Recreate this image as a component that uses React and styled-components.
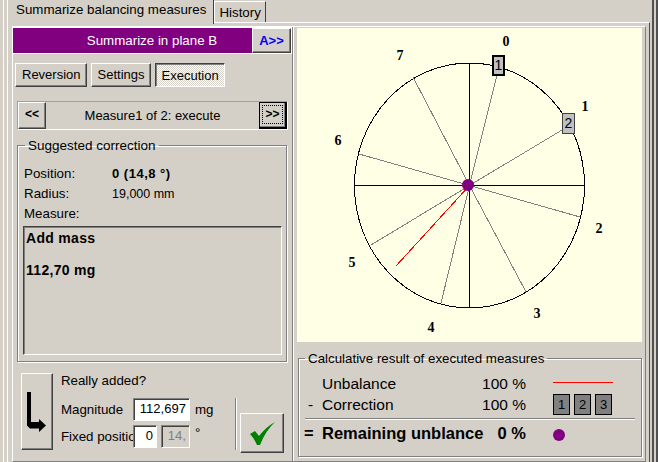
import React from 'react';
import styled, { createGlobalStyle, css } from 'styled-components';

const GlobalStyle = createGlobalStyle`
  html, body {
    margin: 0;
    padding: 0;
    background: #d4d0c8;
    overflow: hidden;
  }
`;

const raised = css`
  border: 1px solid;
  border-color: #fff #404040 #404040 #fff;
  box-shadow: inset -1px -1px 0 #808080;
`;

const Window = styled.div`
  width: 658px;
  height: 462px;
  box-sizing: border-box;
  background: #d4d0c8;
  font-family: "Liberation Sans", Arial, sans-serif;
  font-size: 13.33px;
  color: #000;
  padding-left: 3px;
  overflow: hidden;
`;

const OuterFrame = styled.div`
  box-sizing: border-box;
  height: 462px;
  border-left: 1px solid #fff;
  border-right: 2px solid #505050;
  padding-right: 2px;
`;

const InnerFrame = styled.div`
  box-sizing: border-box;
  height: 462px;
  border-right: 2px solid #505050;
  padding: 0 2px 0 3px;
`;

const TabStrip = styled.div`
  display: flex;
  align-items: flex-start;
  height: 22px;
  position: relative;
  z-index: 1;
`;

const Tab = styled.div`
  box-sizing: border-box;
  background: #d4d0c8;
  border-left: 1px solid #fff;
  border-right: 1px solid #404040;
  white-space: nowrap;
  ${p => (p.$active
    ? css`
      height: 24px;
      line-height: 20px;
      padding: 0 7px 0 8px;
    `
    : css`
      height: 21px;
      margin-top: 1px;
      line-height: 21px;
      padding: 0 4px;
      border-top: 1px solid #fff;
    `)}
`;

const Page = styled.div`
  box-sizing: border-box;
  height: 440px;
  border-top: 1px solid #fff;
  border-left: 1px solid #fff;
  border-right: 1px solid #505050;
  padding: 3px 3px 0 4px;
`;

const Body = styled.div`
  display: grid;
  grid-template-columns: 280px 1fr;
  box-sizing: border-box;
  height: 436px;
  border-top: 1px solid #fff;
  border-left: 1px solid #fff;
  border-right: 1px solid #808080;
  border-bottom: 1px solid #808080;
`;

const LeftColumn = styled.div`
  display: flex;
  flex-direction: column;
  padding-top: 1px;
  border-right: 1px solid #808080;
`;

const RightColumn = styled.div`
  padding: 1px 3px 0 3px;
  border-left: 1px solid #fff;
`;

const Header = styled.div`
  display: flex;
  flex: none;
  box-sizing: border-box;
  height: 26px;
  background: #800080;
  color: #fff;
  border-right: 1px solid #fff;
  border-bottom: 1px solid #fff;
  box-shadow: 0 -1px 0 #fff;
`;

const HeaderTitle = styled.div`
  flex: 1;
  text-align: center;
  line-height: 25px;
  padding-left: 39px;
`;

const PlaneButton = styled.div`
  ${raised}
  width: 39px;
  box-sizing: border-box;
  background: #d4d0c8;
  color: #0000ff;
  font-weight: bold;
  font-size: 13px;
  line-height: 23px;
  text-align: center;
`;

const TabButtons = styled.div`
  display: flex;
  gap: 4px;
  padding: 9px 0 0 2px;
`;

const ModeButton = styled.div`
  ${raised}
  box-sizing: border-box;
  height: 24px;
  font-size: 13px;
  line-height: 22px;
  padding: 0 5px 0 6px;
  ${p => p.$active && css`
    border-color: #404040 #fff #fff #404040;
    box-shadow: inset 1px 1px 0 #808080;
    line-height: 23px;
    padding: 0 5px 0 6px;
    background: repeating-conic-gradient(#fff 0 25%, #d4d0c8 0 50%) 0 0 / 2px 2px;
  `}
`;

const Pager = styled.div`
  display: flex;
  align-items: center;
  flex: none;
  box-sizing: border-box;
  height: 29px;
  margin: 14px 4px 0 4px;
  border: 1px solid;
  border-color: #a0a0a0 #fff #fff #a0a0a0;
`;

const PagerButton = styled.div`
  ${raised}
  width: 28px;
  height: 27px;
  box-sizing: border-box;
  font-weight: bold;
  font-size: 12px;
  line-height: 23px;
  text-align: center;
  ${p => p.$focused && css`
    border: 2px solid #000;
    border-top-width: 1px;
    border-left-width: 1px;
    box-shadow: inset -1px -1px 0 #808080;
    position: relative;
    &::after {
      content: '';
      position: absolute;
      inset: 2px 2px 3px 2px;
      border: 1px dotted #000;
    }
  `}
`;

const PagerLabel = styled.div`
  flex: 1;
  text-align: center;
  font-size: 13px;
`;

const GroupBox = styled.fieldset`
  margin: 0;
  min-width: 0;
  box-sizing: border-box;
  border: 1px solid #808080;
  box-shadow: inset 1px 1px 0 #fff, 1px 1px 0 #fff;
`;

const GroupLegend = styled.legend`
  padding: 0 3px;
  line-height: 15px;
  font-size: 13.5px;
  white-space: nowrap;
`;

const CorrectionBox = styled(GroupBox)`
  flex: none;
  margin: 8px 5px 0 4px;
  height: 224px;
  padding: 11px 4px 0 6px;
  ${GroupLegend} {
    margin-left: 1px;
  }
`;

const InfoRow = styled.div`
  display: grid;
  grid-template-columns: 88px 1fr;
  height: 20px;
  line-height: 20px;
`;

const InfoValue = styled.span`
  font-size: 12.5px;
  ${p => p.$bold && css`
    font-weight: bold;
    font-size: 13px;
    letter-spacing: 0.5px;
  `}
`;

const MeasureBox = styled.div`
  box-sizing: border-box;
  height: 129px;
  margin: 2px 0 0 -1px;
  padding: 0 2px;
  border: 1px solid;
  border-color: #404040 #fff #fff #404040;
  box-shadow: inset 1px 1px 0 #808080;
  font-weight: bold;
  font-size: 14px;
  letter-spacing: 0.3px;
`;

const MeasureLine = styled.div`
  height: 32px;
  line-height: 22px;
`;

const Confirm = styled.div`
  display: flex;
  padding: 11px 8px 0 8px;
`;

const ArrowButton = styled.div`
  ${raised}
  box-sizing: border-box;
  width: 32px;
  height: 77px;
  display: flex;
  align-items: center;
  justify-content: center;
`;

const ConfirmFields = styled.div`
  width: 175px;
  margin-left: 8px;
`;

const ReallyLabel = styled.div`
  line-height: 16px;
  height: 25px;
`;

const FieldRow = styled.div`
  display: flex;
  align-items: flex-start;
  height: 27px;
  line-height: 23px;
`;

const FieldLabel = styled.div`
  width: 72px;
  white-space: nowrap;
  overflow: hidden;
`;

const Field = styled.div`
  box-sizing: border-box;
  height: 23px;
  width: ${p => p.$width}px;
  margin-right: 5px;
  ${p => p.$disabled && 'margin-left: -1px;'}
  font-size: 13px;
  line-height: 20px;
  padding-right: 3px;
  text-align: right;
  overflow: hidden;
  background: ${p => (p.$disabled ? '#d4d0c8' : '#fff')};
  color: ${p => (p.$disabled ? '#808080' : '#000')};
  border: 1px solid;
  border-color: #808080 #fff #fff #808080;
  box-shadow: inset 1px 1px 0 #404040;
`;

const DegreeSign = styled.span`
  line-height: 16px;
`;

const Divider = styled.div`
  width: 1px;
  height: 52px;
  margin: 25px 3px 0 0;
  background: #808080;
  border-right: 1px solid #fff;
`;

const CheckButton = styled.div`
  ${raised}
  box-sizing: border-box;
  width: 44px;
  height: 40px;
  margin-top: 40px;
  display: flex;
  align-items: center;
  justify-content: center;
`;

const Canvas = styled.div`
  position: relative;
  width: 345px;
  height: 314px;
  background: #ffffe6;
`;

const DialSvg = styled.svg`
  display: block;
`;

const Spot = styled.div`
  position: absolute;
  left: ${p => p.$x}px;
  top: ${p => p.$y}px;
  transform: translate(-50%, -50%);
  font-family: "Liberation Serif", serif;
  font-weight: bold;
  font-size: 14px;
  line-height: 14px;
`;

const SpotMarker = styled.div`
  position: absolute;
  left: ${p => p.$x}px;
  top: ${p => p.$y}px;
  box-sizing: border-box;
  width: 13px;
  height: 21px;
  line-height: ${p => (p.$current ? 17 : 19)}px;
  text-align: center;
  font-size: 14px;
  background: #c0c0c0;
  border: ${p => (p.$current ? '2px solid #000' : '1px solid #404040')};
`;

const ResultBox = styled(GroupBox)`
  margin: 9px 0 0 1px;
  height: 106px;
  padding: 8px 5px 0 5px;
  ${GroupLegend} {
    margin-left: 1px;
    font-size: 13.33px;
  }
`;

const ResultRow = styled.div`
  display: grid;
  grid-template-columns: 18px 154px 50px 27px 1fr;
  align-items: center;
  height: 20px;
  font-size: 15.5px;
  white-space: nowrap;
`;

const Minus = styled.span`
  padding-left: 4px;
`;

const Percent = styled.span`
  text-align: right;
`;

const LegendLine = styled.div`
  height: 1px;
  width: 60px;
  background: #ff0000;
  margin-top: -4px;
`;

const Squares = styled.div`
  display: flex;
  gap: 4px;
`;

const Square = styled.div`
  box-sizing: border-box;
  width: 17px;
  height: 21px;
  border: 1px solid #000;
  background: #808080;
  font-size: 13px;
  line-height: 19px;
  text-align: center;
`;

const Rule = styled.div`
  height: 1px;
  margin: 4px 1px 0 1px;
  background: #808080;
  border-bottom: 1px solid #fff;
`;

const RemainingRow = styled(ResultRow)`
  height: 26px;
  font-weight: bold;
  font-size: 16.5px;
`;

const Dot = styled.div`
  width: 12px;
  height: 12px;
  margin-top: 3px;
  border-radius: 50%;
  background: #800080;
`;

const cx = 172.5;
const cy = 157.5;

// spoke ends and number labels, in canvas coordinates
const spokes = [
  [200, 47], [265, 102], [283, 189], [229, 264],
  [144, 275], [74, 217], [62, 126], [116, 49],
];

const labels = [
  ['0', 209, 14], ['1', 288, 79], ['2', 302, 201], ['3', 240, 286],
  ['4', 134, 300], ['5', 55, 235], ['6', 41, 113], ['7', 103, 28],
];

const Dial = () => (
  <Canvas>
    <DialSvg width="345" height="314" shapeRendering="crispEdges">
      <ellipse cx={cx} cy={cy} rx="115" ry="122.5" fill="none" stroke="#000" />
      <path d={`M${cx} 35V280M58 ${cy}H288`} stroke="#000" />
      {spokes.map(([x, y]) => (
        <line key={x} x1={cx} y1={cy} x2={x} y2={y} stroke="#808080" />
      ))}
      <line x1={cx} y1={cy} x2="99" y2="238" stroke="#f00" />
      <circle cx="171" cy="157" r="6" fill="#800080" shapeRendering="auto" />
    </DialSvg>
    {labels.map(([text, x, y]) => (
      <Spot key={text} $x={x} $y={y}>{text}</Spot>
    ))}
    <SpotMarker $current $x={195} $y={27}>1</SpotMarker>
    <SpotMarker $x={265} $y={85}>2</SpotMarker>
  </Canvas>
);

const App = () => (
  <Window>
    <GlobalStyle />
    <OuterFrame>
      <InnerFrame>
        <TabStrip>
          <Tab $active>Summarize balancing measures</Tab>
          <Tab>History</Tab>
        </TabStrip>
        <Page>
          <Body>
            <LeftColumn>
              <Header>
                <HeaderTitle>Summarize in plane B</HeaderTitle>
                <PlaneButton>A&gt;&gt;</PlaneButton>
              </Header>
              <TabButtons>
                <ModeButton>Reversion</ModeButton>
                <ModeButton>Settings</ModeButton>
                <ModeButton $active>Execution</ModeButton>
              </TabButtons>
              <Pager>
                <PagerButton>&lt;&lt;</PagerButton>
                <PagerLabel>Measure1 of 2: execute</PagerLabel>
                <PagerButton $focused>&gt;&gt;</PagerButton>
              </Pager>
              <CorrectionBox>
                <GroupLegend>Suggested correction</GroupLegend>
                <InfoRow>Position: <InfoValue $bold>0 (14,8 °)</InfoValue></InfoRow>
                <InfoRow>Radius: <InfoValue>19,000 mm</InfoValue></InfoRow>
                <InfoRow>Measure:</InfoRow>
                <MeasureBox>
                  <MeasureLine>Add mass</MeasureLine>
                  <MeasureLine>112,70 mg</MeasureLine>
                </MeasureBox>
              </CorrectionBox>
              <Confirm>
                <ArrowButton>
                  <svg width="20" height="40" viewBox="0 0 20 40">
                    <path d="M0 0H4V30H12V27L19 33.5L12 40V36.5H3L0 33.5Z" fill="#000" />
                  </svg>
                </ArrowButton>
                <ConfirmFields>
                  <ReallyLabel>Really added?</ReallyLabel>
                  <FieldRow>
                    <FieldLabel>Magnitude</FieldLabel>
                    <Field $width={57}>112,697</Field>
                    <span>mg</span>
                  </FieldRow>
                  <FieldRow>
                    <FieldLabel>Fixed position</FieldLabel>
                    <Field $width={24}>0</Field>
                    <Field $disabled $width={29}>14,</Field>
                    <DegreeSign>°</DegreeSign>
                  </FieldRow>
                </ConfirmFields>
                <Divider />
                <CheckButton>
                  <svg width="25" height="23" viewBox="0 0 25 23">
                    <path d="M0 12L5 9L9 14Q16 5 25 0Q16 8 10 23H7Q4 16 0 12Z" fill="#008000" />
                  </svg>
                </CheckButton>
              </Confirm>
            </LeftColumn>
            <RightColumn>
              <Dial />
              <ResultBox>
                <GroupLegend>Calculative result of executed measures</GroupLegend>
                <ResultRow>
                  <span />
                  <span>Unbalance</span>
                  <Percent>100 %</Percent>
                  <span />
                  <LegendLine />
                </ResultRow>
                <ResultRow>
                  <Minus>-</Minus>
                  <span>Correction</span>
                  <Percent>100 %</Percent>
                  <span />
                  <Squares>
                    <Square>1</Square>
                    <Square>2</Square>
                    <Square>3</Square>
                  </Squares>
                </ResultRow>
                <Rule />
                <RemainingRow>
                  <span>=</span>
                  <span>Remaining unblance</span>
                  <Percent>0 %</Percent>
                  <span />
                  <Dot />
                </RemainingRow>
              </ResultBox>
            </RightColumn>
          </Body>
        </Page>
      </InnerFrame>
    </OuterFrame>
  </Window>
);

export default App;
